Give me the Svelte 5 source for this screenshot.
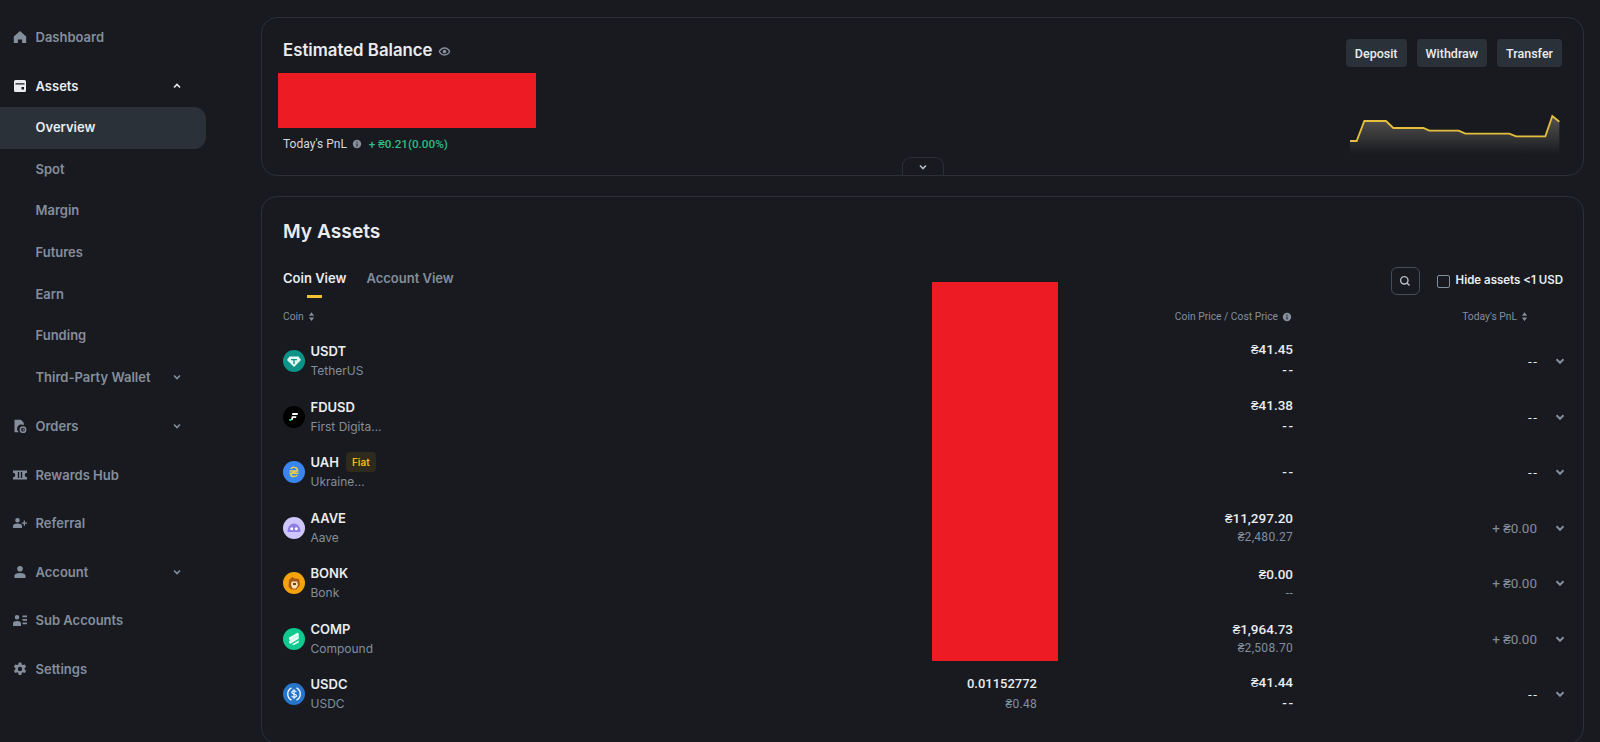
<script>
  const subNav = ["Spot", "Margin", "Futures", "Earn", "Funding"];

  const coins = [
    { sym: "USDT", name: "TetherUS", price: "₴41.45", cost: "--", pnl: "--", icon: "usdt" },
    { sym: "FDUSD", name: "First Digita...", price: "₴41.38", cost: "--", pnl: "--", icon: "fdusd" },
    { sym: "UAH", name: "Ukraine...", fiat: true, price: "--", cost: "", pnl: "--", icon: "uah" },
    { sym: "AAVE", name: "Aave", price: "₴11,297.20", cost: "₴2,480.27", pnl: "+ ₴0.00", icon: "aave" },
    { sym: "BONK", name: "Bonk", price: "₴0.00", cost: "--", dimCost: true, pnl: "+ ₴0.00", icon: "bonk" },
    { sym: "COMP", name: "Compound", price: "₴1,964.73", cost: "₴2,508.70", pnl: "+ ₴0.00", icon: "comp" },
    { sym: "USDC", name: "USDC", price: "₴41.44", cost: "--", pnl: "--", icon: "usdc", amount: "0.01152772", value: "₴0.48" }
  ];

  const line = "0,360 20,360 43,300 108,300 130,321 220,321 238,329 326,329 346,338 478,338 498,346 586,346 607,285 628,302";
</script>

<div class="page">
  <aside class="sidebar">
    <div class="nav-item">
      <svg class="nav-icon" viewBox="0 0 16 16"><path d="M8 2 1.800 7.600V14h4.100v-3.600h4.200V14h4.100V7.600z" /></svg>
      <span>Dashboard</span>
    </div>

    <div class="nav-item group-head active">
      <svg class="nav-icon" viewBox="0 0 16 16"><path fill-rule="evenodd" d="M3.500 2h9A1.500 1.500 0 0 1 14 3.500v9a1.500 1.500 0 0 1-1.500 1.500h-9A1.500 1.500 0 0 1 2 12.500v-9A1.500 1.500 0 0 1 3.500 2zM3.500 5.200v1.300h9V5.200zM9.500 9v2.500H12V9z" /></svg>
      <span>Assets</span>
      <svg class="chev" viewBox="0 0 12 12"><path d="M3 7.500 6 4.500l3 3" /></svg>
    </div>
    <div class="sub-item current"><span>Overview</span></div>
    {#each subNav as item}
      <div class="sub-item"><span>{item}</span></div>
    {/each}
    <div class="sub-item">
      <span>Third-Party Wallet</span>
      <svg class="chev" viewBox="0 0 12 12"><path d="M3 4.500l3 3 3-3" /></svg>
    </div>

    <div class="nav-item after-group">
      <svg class="nav-icon" viewBox="0 0 16 16"><path fill-rule="evenodd" d="M2.500 1.800h6.300l3 3v2.500a4.200 4.200 0 0 0-5 6.900H2.500zM11 8.300a3.400 3.400 0 1 1 0 6.800 3.400 3.400 0 0 1 0-6.800zm0 1.500a1.900 1.900 0 1 0 0 3.800 1.900 1.900 0 0 0 0-3.800zm-.4.800h.8v1h.9v.8h-1.700z" /></svg>
      <span>Orders</span>
      <svg class="chev" viewBox="0 0 12 12"><path d="M3 4.500l3 3 3-3" /></svg>
    </div>
    <div class="nav-item">
      <svg class="nav-icon" viewBox="0 0 16 16"><path fill-rule="evenodd" d="M1 3.500h14v2.200a2.300 2.300 0 0 0 0 4.600v2.200H1v-2.200a2.300 2.300 0 0 0 0-4.600zM5.800 5v6h1.400V5zm3 0v6h1.400V5z" /></svg>
      <span>Rewards Hub</span>
    </div>
    <div class="nav-item">
      <svg class="nav-icon" viewBox="0 0 16 16"><path d="M5.500 3a2.300 2.300 0 1 1 0 4.600 2.300 2.300 0 0 1 0-4.600zM1 13v-2c0-1.500 1.500-2.500 4.500-2.500S10 9.500 10 11v2zM11.700 5.500h1.300v2h2v1.300h-2v2h-1.300v-2h-2V7.500h2z" /></svg>
      <span>Referral</span>
    </div>
    <div class="nav-item">
      <svg class="nav-icon" viewBox="0 0 16 16"><path d="M8 2a2.800 2.800 0 1 1 0 5.600A2.800 2.800 0 0 1 8 2zM2.500 14v-2.300C2.500 10 4.500 9 8 9s5.500 1 5.500 2.700V14z" /></svg>
      <span>Account</span>
      <svg class="chev" viewBox="0 0 12 12"><path d="M3 4.500l3 3 3-3" /></svg>
    </div>
    <div class="nav-item">
      <svg class="nav-icon" viewBox="0 0 16 16"><path d="M5 3a2.300 2.300 0 1 1 0 4.600A2.300 2.300 0 0 1 5 3zM1 14v-2.500C1 9.800 2.500 9 5 9s4 .8 4 2.500V14zM10.500 3.500H15v1.700h-4.500zM10.500 7H15v1.700h-4.500zM10.500 10.500H15v1.700h-4.500z" /></svg>
      <span>Sub Accounts</span>
    </div>
    <div class="nav-item">
      <svg class="nav-icon" viewBox="0 0 16 16"><path fill-rule="evenodd" d="M6.700 1.500h2.600l.4 1.900 1.200.7 1.900-.6 1.300 2.200-1.500 1.300v1.400l1.500 1.300-1.300 2.200-1.900-.6-1.200.7-.4 1.900H6.700l-.4-1.900-1.200-.7-1.900.6-1.300-2.200 1.500-1.300V7l-1.500-1.300 1.300-2.200 1.900.6 1.200-.7zM8 5.800a2.200 2.200 0 1 0 0 4.400 2.200 2.200 0 0 0 0-4.400z" /></svg>
      <span>Settings</span>
    </div>
  </aside>

  <main class="main">
    <section class="card balance">
      <div class="balance-left">
        <div class="balance-title">
          <h2>Estimated Balance</h2>
          <svg class="eye" viewBox="0 0 14 14"><path fill-rule="evenodd" d="M7 2.500c3 0 5.300 2 6.300 4.500-1 2.500-3.300 4.500-6.300 4.500S1.700 9.500.7 7C1.700 4.500 4 2.500 7 2.500zm0 1.500C5 4 3.200 5.200 2.300 7 3.200 8.800 5 10 7 10s3.800-1.200 4.700-3C10.800 5.200 9 4 7 4zm0 1a2 2 0 1 1 0 4 2 2 0 0 1 0-4z" /></svg>
        </div>
        <div class="redact-balance"></div>
        <div class="pnl-row">
          <span>Today's PnL</span>
          <svg class="info" viewBox="0 0 10 10"><path fill-rule="evenodd" d="M5 .8a4.200 4.200 0 1 1 0 8.400A4.200 4.200 0 0 1 5 .8zM4.500 2.500v1.200h1V2.500zm0 2v3h1v-3z" /></svg>
          <span class="green">+ ₴0.21(0.00%)</span>
        </div>
      </div>
      <div class="balance-right">
        <div class="actions">
          <button>Deposit</button>
          <button>Withdraw</button>
          <button>Transfer</button>
        </div>
        <svg class="spark" viewBox="0 270 630 135">
          <defs>
            <linearGradient id="spark-fill" x1="0" y1="0" x2="0" y2="1">
              <stop offset="0" stop-color="#8a8578" stop-opacity="0.55" />
              <stop offset="1" stop-color="#8a8578" stop-opacity="0" />
            </linearGradient>
          </defs>
          <polygon points="0,400 {line} 628,400" fill="url(#spark-fill)" />
          <polyline points={line} fill="none" stroke="#e4bf3c" stroke-width="5.500" />
        </svg>
      </div>
      <div class="collapse">
        <svg viewBox="0 0 12 12"><path d="M3 4.500l3 3 3-3" /></svg>
      </div>
    </section>

    <section class="card assets">
      <h1>My Assets</h1>
      <div class="toolbar">
        <div class="tabs">
          <span class="tab on">Coin View</span>
          <span class="tab">Account View</span>
        </div>
        <div class="tools">
          <div class="search">
            <svg viewBox="0 0 14 14"><circle cx="6.300" cy="6.300" r="3.700" /><path d="m9 9 2.500 2.500" /></svg>
          </div>
          <span class="check"></span>
          <span class="hide-label">Hide assets &lt;1 USD</span>
        </div>
      </div>

      <div class="table">
        <div class="redact-amounts"></div>
        <div class="head row-grid">
          <span class="sortable">Coin
            <svg class="sort" viewBox="0 0 8 12"><path d="M4 1 7 5H1zM4 11 1 7h6z" /></svg>
          </span>
          <span></span>
          <span class="right sortable head-price">Coin Price / Cost Price
            <svg class="info" viewBox="0 0 10 10"><path fill-rule="evenodd" d="M5 .8a4.200 4.200 0 1 1 0 8.400A4.200 4.200 0 0 1 5 .8zM4.500 2.500v1.200h1V2.500zm0 2v3h1v-3z" /></svg>
          </span>
          <span class="right sortable head-pnl">Today's PnL
            <svg class="sort" viewBox="0 0 8 12"><path d="M4 1 7 5H1zM4 11 1 7h6z" /></svg>
          </span>
          <span></span>
        </div>

        {#each coins as c}
          <div class="row row-grid">
            <div class="coin">
              <svg class="coin-icon" viewBox="0 0 22 22">
                {#if c.icon === "usdt"}
                  <circle cx="11" cy="11" r="11" fill="#0d9488" />
                  <path d="M6.500 6.500h9l2.500 3.500-7 7-7-7z" fill="#e6f7f4" />
                  <path d="M8 9h6v1.200h-2.300V14h-1.400v-3.800H8z" fill="#0d9488" />
                {:else if c.icon === "fdusd"}
                  <circle cx="11" cy="11" r="11" fill="#000" />
                  <path d="M9.500 7h5.500l-.5 2H9zM8.800 10.200h4.700l-.5 1.800h-2.700l-.6 2H8z" fill="#fff" />
                  <rect x="6.300" y="13" width="2" height="2" fill="#19d98b" />
                {:else if c.icon === "uah"}
                  <circle cx="11" cy="11" r="11" fill="#3b86ee" />
                  <path d="M7.800 7.800c1.200-2 6.200-2 6.400.6.200 2.600-6.400 2.900-6.400 5.500.2 2.200 5 2.200 6.600.2M6.500 10h9M6.500 12.300h9" fill="none" stroke="#e8cf4a" stroke-width="1.500" />
                {:else if c.icon === "aave"}
                  <circle cx="11" cy="11" r="11" fill="#cfc6fb" />
                  <path d="M4.500 15c0-5 2.800-8.500 6.500-8.500s6.500 3.500 6.500 8.500z" fill="#8f7ee8" />
                  <circle cx="8.700" cy="11.800" r="1.500" fill="#fff" />
                  <circle cx="13.300" cy="11.800" r="1.500" fill="#fff" />
                {:else if c.icon === "bonk"}
                  <circle cx="11" cy="11" r="11" fill="#f4a30c" />
                  <path d="M6 8l3-3 3 1.500 4 .5 1 6-3.500 4.500H8l-2.500-3z" fill="#a9590f" />
                  <path d="M8.500 9.500h5.500l1 3.500-2 3.500H9.500L8 13z" fill="#f6dfb5" />
                  <rect x="10" y="11" width="3" height="2" fill="#7a3f0a" />
                {:else if c.icon === "comp"}
                  <circle cx="11" cy="11" r="11" fill="#10c98f" />
                  <path d="M6 9.500 14.500 4.800l1.300.9v1.800L7.300 12.200 6 11.400zM6 13 15.800 7.800v2.900L7.300 15.700 6 15zM9 16.200l6.800-3.800v2L10.500 17.300z" fill="#e7fbf4" />
                {:else}
                  <circle cx="11" cy="11" r="11" fill="#2775ca" />
                  <path d="M8.500 4.800a7 7 0 0 0 0 12.400M13.500 4.800a7 7 0 0 1 0 12.400" fill="none" stroke="#fff" stroke-width="1.300" />
                  <path d="M13.300 9c-.4-1-1.200-1.300-2.300-1.300-1.300 0-2.200.6-2.200 1.600 0 2.400 4.600 1 4.600 3.400 0 1-1 1.600-2.400 1.600-1.200 0-2-.5-2.400-1.400M11 6.300v9.400" fill="none" stroke="#fff" stroke-width="1.100" />
                {/if}
              </svg>
              <div class="coin-text">
                <div class="sym">
                  {c.sym}
                  {#if c.fiat}<span class="fiat">Fiat</span>{/if}
                </div>
                <div class="coin-name">{c.name}</div>
              </div>
            </div>
            <div class="num amount">
              {#if c.amount}
                <div class="num-main">{c.amount}</div>
                <div class="num-sub">{c.value}</div>
              {/if}
            </div>
            <div class="num">
              <div class="num-main" class:dashes={c.price === "--"}>{c.price}</div>
              {#if c.cost === "--" && !c.dimCost}
                <div class="num-dash dashes">--</div>
              {:else if c.cost}
                <div class="num-sub">{c.cost}</div>
              {/if}
            </div>
            <div class="num pnl" class:dim={c.pnl !== "--"} class:dashes={c.pnl === "--"}>{c.pnl}</div>
            <svg class="row-chev" viewBox="0 0 12 12"><path d="M3 4.500l3 3 3-3" /></svg>
          </div>
        {/each}
      </div>
    </section>
  </main>
</div>

<style>
  :global(body) {
    margin: 0;
    background: #181a20;
    overflow: hidden;
  }
  .page {
    display: flex;
    height: 742px;
    overflow: hidden;
    background: #181a20;
    color: #eaecef;
    font-family: "Inter", "Roboto", sans-serif;
  }

  /* sidebar */
  .sidebar {
    width: 206px;
    flex: none;
    padding-top: 12.7px;
    font-size: 13px;
    font-weight: 600;
    color: #848e9c;
  }
  .nav-item {
    display: flex;
    align-items: center;
    height: 48.6px;
    padding-left: 12px;
    padding-right: 22px;
    box-sizing: border-box;
  }
  .nav-item span {
    flex: 1;
  }
  .group-head {
    height: 43px;
    margin-top: 2.7px;
    padding-top: 1px;
  }
  .after-group {
    margin-top: 3.5px;
  }
  .active {
    color: #eaecef;
  }
  .nav-icon {
    width: 16px;
    height: 16px;
    margin-right: 7.5px;
    fill: currentColor;
    flex: none;
  }
  .sub-item {
    display: flex;
    align-items: center;
    height: 41.6px;
    padding-left: 35.5px;
    padding-right: 22px;
    padding-bottom: 1px;
    box-sizing: border-box;
  }
  .sub-item span {
    flex: 1;
    white-space: nowrap;
  }
  .current {
    color: #eaecef;
    background: #2b3139;
    border-radius: 0 12px 12px 0;
  }
  .chev {
    width: 12px;
    height: 12px;
    flex: none;
    margin-right: 1px;
    fill: none;
    stroke: currentColor;
    stroke-width: 1.6;
  }

  /* main column */
  .main {
    flex: 1;
    min-width: 0;
    padding: 17px 16px 0 55px;
    display: flex;
    flex-direction: column;
    gap: 20px;
  }
  .card {
    position: relative;
    border: 1px solid #2b3038;
    border-radius: 16px;
    box-sizing: border-box;
  }

  .balance {
    height: 159px;
    flex: none;
    display: flex;
    justify-content: space-between;
    padding: 21px 20px 0 21px;
  }
  .balance-title {
    display: flex;
    align-items: center;
    gap: 5px;
    height: 22px;
  }
  h2 {
    margin: 0;
    font-size: 16.8px;
    font-weight: 600;
  }
  .eye {
    width: 13px;
    height: 13px;
    margin-top: 2px;
    fill: #848e9c;
  }
  .redact-balance {
    width: 258px;
    height: 55px;
    margin: 12px 0 0 -5px;
    background: #ed1c24;
  }
  .pnl-row {
    display: flex;
    align-items: center;
    gap: 5px;
    margin-top: 9px;
    font-family: "Roboto", sans-serif;
    font-size: 12px;
    color: #d5d8dc;
  }
  .green {
    margin-left: 2px;
    color: #2ebd85;
    font-size: 11.7px;
    font-weight: 500;
  }
  .info {
    width: 10px;
    height: 10px;
    fill: #848e9c;
  }
  .balance-right {
    display: flex;
    flex-direction: column;
    align-items: flex-end;
  }
  .actions {
    display: flex;
    gap: 10px;
    margin-right: 1px;
  }
  .actions button {
    height: 28px;
    padding: 0 9px;
    border: 0;
    border-radius: 4px;
    background: #2b3139;
    color: #eaecef;
    font-family: "Roboto", sans-serif;
    font-size: 12.5px;
    font-weight: 500;
  }
  .spark {
    width: 210px;
    height: 45px;
    margin-top: 44px;
    margin-right: 3px;
  }
  .collapse {
    position: absolute;
    left: 640px;
    bottom: 0;
    width: 42px;
    height: 18px;
    box-sizing: border-box;
    border: 1px solid #2b3038;
    border-bottom: 0;
    border-radius: 9px 9px 0 0;
    display: flex;
    align-items: center;
    justify-content: center;
    color: #b7bdc6;
  }
  .collapse svg {
    width: 12px;
    height: 12px;
    fill: none;
    stroke: currentColor;
    stroke-width: 1.6;
  }

  .assets {
    height: 548px;
    flex: none;
    padding: 21px 20px 0 21px;
  }
  h1 {
    margin: 0;
    font-size: 19.2px;
    line-height: 26px;
    font-weight: 600;
  }
  .toolbar {
    display: flex;
    justify-content: space-between;
    margin-top: 19px;
    height: 36.5px;
  }
  .tabs {
    display: flex;
    gap: 20px;
    font-size: 13px;
    font-weight: 600;
    color: #848e9c;
    padding-top: 6px;
  }
  .tab {
    position: relative;
    height: 18px;
    line-height: 18px;
  }
  .tab.on {
    color: #eaecef;
  }
  .tab.on::after {
    content: "";
    position: absolute;
    left: 50%;
    bottom: -11px;
    width: 15px;
    height: 3px;
    margin-left: -7.5px;
    background: #f0c132;
  }
  .tools {
    display: flex;
    align-items: flex-start;
    padding-top: 4px;
  }
  .search {
    width: 29px;
    height: 28px;
    box-sizing: border-box;
    border: 1px solid #474d57;
    border-radius: 6px;
    display: flex;
    align-items: center;
    justify-content: center;
  }
  .search svg {
    width: 14px;
    height: 14px;
    fill: none;
    stroke: #b7bdc6;
    stroke-width: 1.4;
  }
  .check {
    width: 11px;
    height: 11px;
    margin: 8px 6px 0 17px;
    border: 1px solid #848e9c;
    border-radius: 2px;
  }
  .hide-label {
    font-size: 11.5px;
    font-weight: 600;
    line-height: 14px;
    margin-top: 6px;
    color: #eaecef;
  }

  .table {
    position: relative;
  }
  .redact-amounts {
    position: absolute;
    left: 649px;
    top: -17.5px;
    width: 126px;
    height: 379px;
    background: #ed1c24;
    z-index: 1;
  }
  .row-grid {
    display: grid;
    grid-template-columns: 1fr 116px 256px 244px 26px;
    align-items: center;
  }
  .head {
    height: 34px;
    font-family: "Roboto", sans-serif;
    font-size: 10.3px;
    color: #848e9c;
  }
  .sortable {
    display: flex;
    align-items: center;
    gap: 4px;
  }
  .right {
    justify-content: flex-end;
  }
  .head-price {
    padding-right: 1px;
  }
  .head-pnl {
    padding-right: 9px;
  }
  .sort {
    width: 7px;
    height: 11px;
    fill: #848e9c;
  }
  .row {
    height: 55.5px;
  }
  .coin {
    display: flex;
    align-items: center;
    gap: 5.5px;
  }
  .coin-icon {
    width: 22px;
    height: 22px;
    flex: none;
  }
  .sym {
    display: flex;
    align-items: center;
    gap: 7px;
    height: 20px;
    font-size: 13px;
    font-weight: 600;
  }
  .fiat {
    padding: 0 6px;
    height: 20px;
    line-height: 20px;
    border-radius: 4px;
    background: #2e2a1c;
    color: #f0b90b;
    font-size: 10px;
    font-weight: 600;
  }
  .coin-name {
    height: 20px;
    line-height: 20px;
    font-size: 12px;
    font-weight: 400;
    color: #848e9c;
  }
  .num {
    text-align: right;
    font-family: "Roboto", sans-serif;
    font-size: 13.5px;
    font-weight: 500;
  }
  .num-main {
    line-height: 20px;
  }
  .num-sub {
    line-height: 19px;
    font-size: 12px;
    font-weight: 400;
    letter-spacing: 0.3px;
    color: #848e9c;
  }
  .num-dash {
    line-height: 22px;
    padding-bottom: 2px;
  }
  .dashes {
    letter-spacing: 1.5px;
    margin-right: -1.5px;
  }
  .amount {
    font-size: 13px;
  }
  .amount .num-sub {
    line-height: 21px;
  }
  .pnl {
    font-weight: 400;
  }
  .dim {
    color: #848e9c;
  }
  .row-chev {
    width: 14px;
    height: 14px;
    justify-self: end;
    margin-right: -4px;
    fill: none;
    stroke: #848e9c;
    stroke-width: 1.7;
  }
</style>
